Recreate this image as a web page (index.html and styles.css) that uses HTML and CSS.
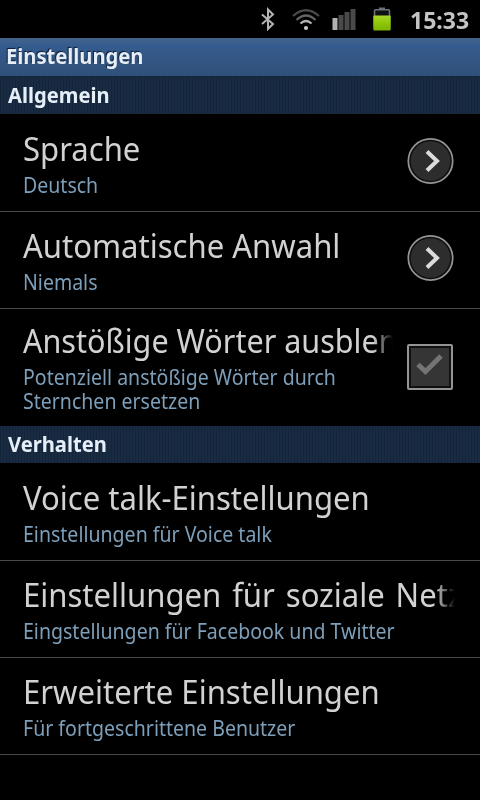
FILE: index.html
```html
<!DOCTYPE html>
<html lang="de">
<head>
  <meta charset="UTF-8" />
  <meta name="viewport" content="width=device-width, initial-scale=1.0" />
  <title>Einstellungen</title>
  <link rel="stylesheet" href="styles.css">
</head>
<body>
  <div class="statusbar">
    <svg class="bluetooth" width="16" height="24" viewBox="0 0 16 24">
      <path d="M2 7.5 L13 17 L8 22 V2.5 L13 7.5 L2 17" fill="none" stroke="#b5b5b5" stroke-width="2" />
    </svg>
    <svg class="wifi" width="28" height="24" viewBox="0 0 28 24">
      <g fill="none" stroke-width="2.3">
        <path d="M1 9 Q14 -2.5 27 9" stroke="#4a4a4a" />
        <path d="M4.5 13 Q14 4 23.5 13" stroke="#636363" />
        <path d="M8.5 16.5 Q14 11.5 19.5 16.5" stroke="#b5b5b5" />
      </g>
      <circle cx="14" cy="21" r="2.1" fill="#c8c8c8" />
    </svg>
    <svg class="signal" width="24" height="24" viewBox="0 0 24 24">
      <rect x="0.5" y="11" width="5" height="12" fill="#b0b0b0" />
      <rect x="6.5" y="8" width="5" height="15" fill="#4a4a4a" />
      <rect x="12.5" y="5" width="5" height="18" fill="#4a4a4a" />
      <rect x="18.5" y="2" width="5" height="21" fill="#4a4a4a" />
    </svg>
    <svg class="battery" width="18" height="24" viewBox="0 0 18 24">
      <defs>
        <linearGradient id="charge" x1="0" y1="0" x2="0" y2="1">
          <stop offset="0" stop-color="#a9d82b" />
          <stop offset="0.5" stop-color="#8fc70a" />
          <stop offset="1" stop-color="#7bb300" />
        </linearGradient>
      </defs>
      <path d="M6 0.5 h6 v2 h-6z" fill="#6c7277" />
      <rect x="1.5" y="2.8" width="15" height="19" rx="1" fill="#111" stroke="#6c7277" stroke-width="1.6" />
      <rect x="0.3" y="8.5" width="17.4" height="15" rx="1" fill="url(#charge)" />
    </svg>
    <span class="clock">15:33</span>
  </div>

  <h1 class="titlebar"><span>Einstellungen</span></h1>

  <h2 class="section"><span>Allgemein</span></h2>
  <div class="row">
    <div class="text">
      <div class="name"><span>Sprache</span></div>
      <div class="summary"><span>Deutsch</span></div>
    </div>
    <svg class="widget" width="48" height="48" viewBox="0 0 48 48">
      <circle cx="24.5" cy="24" r="22.2" fill="#101010" stroke="#949494" stroke-width="1.7" />
      <circle cx="24.5" cy="24" r="19.8" fill="#2d2d2d" />
      <path d="M21 14.5 L31 24 L21 33.5" fill="none" stroke="#dcdcdc" stroke-width="4" />
    </svg>
  </div>
  <div class="row">
    <div class="text">
      <div class="name"><span>Automatische Anwahl</span></div>
      <div class="summary"><span>Niemals</span></div>
    </div>
    <svg class="widget" width="48" height="48" viewBox="0 0 48 48">
      <circle cx="24.5" cy="24" r="22.2" fill="#101010" stroke="#949494" stroke-width="1.7" />
      <circle cx="24.5" cy="24" r="19.8" fill="#2d2d2d" />
      <path d="M21 14.5 L31 24 L21 33.5" fill="none" stroke="#dcdcdc" stroke-width="4" />
    </svg>
  </div>
  <div class="row tall">
    <div class="text">
      <div class="name fade"><span class="tight">Anstößige Wörter ausblen</span></div>
      <div class="summary"><span>Potenziell anstößige Wörter durch<br>Sternchen ersetzen</span></div>
    </div>
    <svg class="widget" width="48" height="48" viewBox="0 0 48 48">
      <rect x="2" y="2" width="44" height="44" rx="1" fill="#101010" stroke="#949494" stroke-width="2" />
      <rect x="5" y="5" width="38" height="38" fill="#353535" />
      <path d="M12 21.5 L19.5 28.5 L35 13" fill="none" stroke="#747474" stroke-width="5" />
    </svg>
  </div>

  <h2 class="section"><span>Verhalten</span></h2>
  <div class="row">
    <div class="text">
      <div class="name"><span>Voice talk-Einstellungen</span></div>
      <div class="summary"><span>Einstellungen für Voice talk</span></div>
    </div>
  </div>
  <div class="row">
    <div class="text">
      <div class="name fade"><span class="loose">Einstellungen für soziale Netz</span></div>
      <div class="summary"><span>Eingstellungen für Facebook und Twitter</span></div>
    </div>
  </div>
  <div class="row">
    <div class="text">
      <div class="name"><span>Erweiterte Einstellungen</span></div>
      <div class="summary"><span>Für fortgeschrittene Benutzer</span></div>
    </div>
  </div>
</body>
</html>
```
FILE: styles.css
```css
* {
  box-sizing: border-box;
}
body {
  margin: 0;
  width: 480px;
  height: 800px;
  overflow: hidden;
  background-color: #000;
  color: #d2d2d2;
  font-family: "Noto Sans", "Open Sans", sans-serif;
  white-space: nowrap;
}

/* the face is set slightly condensed */
.clock, .titlebar span, .section span, .name span, .summary span {
  display: inline-block;
  transform: scaleX(0.93);
  transform-origin: 0 50%;
}
.name span {
  transform: scaleX(0.941);
}
.name .tight {
  transform: scaleX(0.925);
}
.name .loose {
  word-spacing: 3px;
}
.clock, .titlebar span, .section span {
  transform: scaleX(0.96);
}

.statusbar {
  height: 38px;
  display: flex;
  align-items: center;
  padding-left: 260px;
}
.statusbar svg {
  flex: none;
}
.wifi {
  margin-left: 16px;
}
.signal {
  margin-left: 12px;
}
.battery {
  margin-left: 17px;
}
.clock {
  margin-left: 19px;
  font-size: 24px;
  font-weight: bold;
  color: #c4c4c4;
}

.titlebar, .section {
  margin: 0;
  font-size: 21px;
  font-weight: bold;
  line-height: 36px;
  color: #e6eef8;
}
.titlebar {
  height: 39px;
  padding-left: 6px;
  background: linear-gradient(#44648b, #355c8f 20%, #2f5078);
  border-bottom: 1px solid #14263d;
  text-shadow: -1px -1px 1px #0c1b30;
}
.section {
  height: 38px;
  padding-left: 8px;
  background: repeating-linear-gradient(90deg, #14253a 0 1px, #182b42 1px 3px);
  border-bottom: 1px solid #000;
}

.row {
  display: flex;
  align-items: center;
  height: 97px;
  padding: 0 25px 0 23px;
  border-bottom: 1px solid #494949;
}
.row.tall {
  height: 117px;
  border-bottom: none;
}
.text {
  flex: 1;
  min-width: 0;
}
.name {
  font-size: 33px;
  line-height: 47px;
  margin: -5px 0 -4px;
  overflow: hidden;
}
.fade {
  -webkit-mask-image: linear-gradient(90deg, #000 calc(100% - 20px), transparent);
  mask-image: linear-gradient(90deg, #000 calc(100% - 20px), transparent);
}
.summary {
  font-size: 21px;
  line-height: 24px;
  margin-top: 5px;
  color: #7d9fb9;
}
.widget {
  flex: none;
  margin: 0 1px 4px 13px;
}
.tall .widget {
  margin-bottom: 2px;
}
```
